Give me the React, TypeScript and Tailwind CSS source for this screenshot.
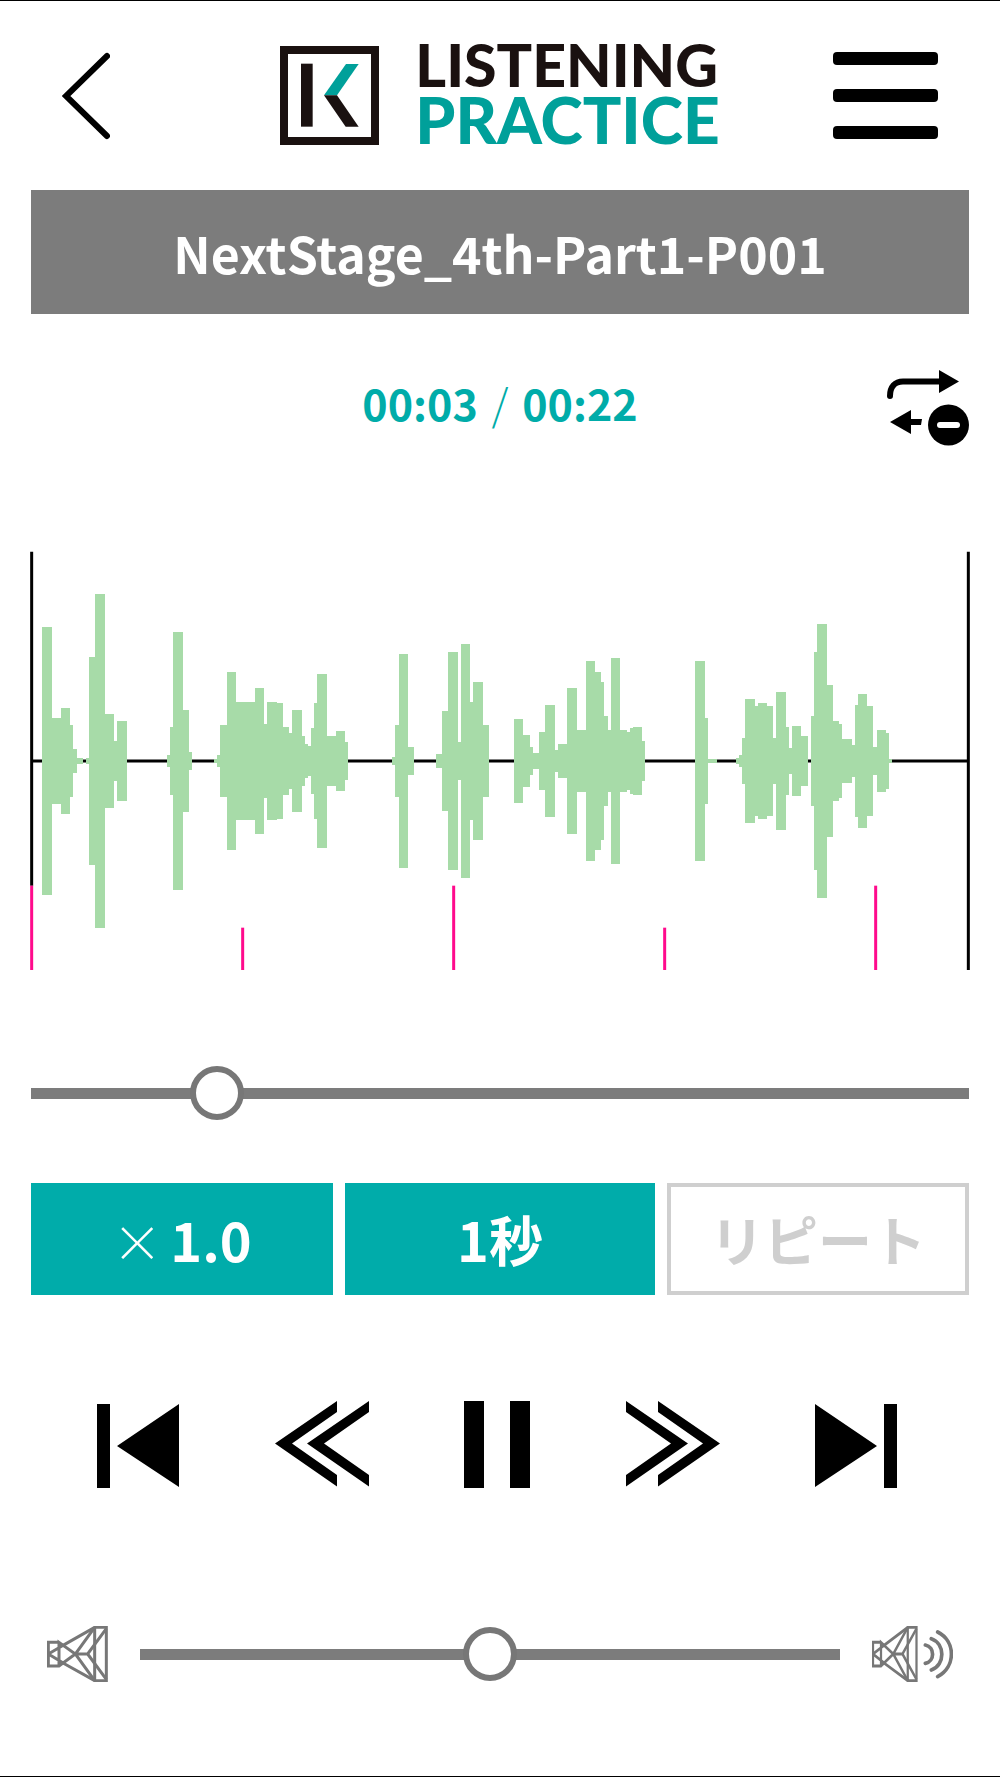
import { useState } from 'react';

// step profile of the clip: [start x, half height]
const waveSteps: [number, number][] = [
  [34, 402], [62, 130], [90, 158], [118, 107], [127, 36], [137, 8], [155, 0],
  [165, 8], [174, 313], [193, 500], [221, 140], [249, 60], [259, 121], [287, 0],
  [409, 18], [418, 102], [427, 388], [455, 154], [474, 28], [483, 0],
  [550, 5], [559, 18], [568, 107], [587, 266], [615, 177], [671, 219],
  [699, 112], [709, 177], [737, 173], [755, 102], [774, 84], [784, 154],
  [812, 74], [821, 50], [831, 46], [840, 98], [849, 173], [859, 262],
  [887, 74], [915, 90], [943, 56], [952, 0],
  [1084, 13], [1093, 107], [1103, 320], [1130, 41], [1148, 0],
  [1215, 21], [1234, 149], [1252, 327], [1280, 57], [1290, 351], [1318, 177],
  [1327, 238], [1355, 107], [1374, 0],
  [1449, 126], [1477, 79], [1496, 41], [1505, 23], [1524, 88], [1543, 168],
  [1571, 32], [1580, 51], [1609, 219], [1637, 93], [1665, 299], [1693, 266],
  [1711, 238], [1720, 135], [1730, 93], [1740, 308], [1768, 93], [1787, 88],
  [1797, 98], [1807, 103], [1833, 60], [1843, 0],
  [1993, 299], [2021, 130], [2030, 5], [2058, 0],
  [2115, 8], [2124, 18], [2133, 69], [2143, 187], [2171, 164], [2181, 173],
  [2208, 166], [2227, 69], [2236, 208], [2264, 102], [2274, 39], [2283, 105],
  [2311, 74], [2330, 0], [2340, 135], [2349, 327], [2359, 412], [2387, 229],
  [2405, 121], [2424, 112], [2433, 65], [2462, 47], [2471, 168], [2481, 201],
  [2508, 164], [2527, 42], [2537, 93], [2565, 84], [2574, 5], [2583, 0]
];

const WAVE_WIDTH = 2814;
const WAVE_MIDDLE = 630;
const secondMarks = [0, 633, 1266, 1899, 2532];

const wavePath = waveSteps
  .map(([x, half], i) => {
    if (half === 0) return '';
    const next = waveSteps[i + 1][0];
    return `M${x} ${WAVE_MIDDLE - half}H${next}V${WAVE_MIDDLE + half}H${x}Z`;
  })
  .join('');

function Waveform() {
  return (
    <svg
      viewBox={`0 0 ${WAVE_WIDTH} 1260`}
      preserveAspectRatio="none"
      className="mt-[105px] h-[420px] w-full overflow-visible"
      role="img"
      aria-label="Waveform"
    >
      <path
        d={`M2 2V1004M${WAVE_WIDTH - 2} 2V1257M0 ${WAVE_MIDDLE}H${WAVE_WIDTH}`}
        stroke="#000"
        strokeWidth="9"
      />
      <path d={wavePath} fill="#a7dba8" shapeRendering="crispEdges" />
      {secondMarks.map((x, i) => (
        <path
          key={x}
          d={`M${x + 2} ${i % 2 === 0 ? 1004 : 1130}V1257`}
          stroke="#ff0a8c"
          strokeWidth="9"
        />
      ))}
    </svg>
  );
}

function Range({
  label,
  value,
  onChange
}: {
  label: string;
  value: number;
  onChange: (value: number) => void;
}) {
  return (
    <input
      type="range"
      min={0}
      max={100}
      value={value}
      onChange={(e) => onChange(Number(e.target.value))}
      aria-label={label}
      className="block h-[54px] w-full min-w-0 cursor-pointer appearance-none bg-transparent [&::-webkit-slider-runnable-track]:h-[11px] [&::-webkit-slider-runnable-track]:bg-[#7c7c7c] [&::-webkit-slider-thumb]:-mt-[22px] [&::-webkit-slider-thumb]:size-[54px] [&::-webkit-slider-thumb]:appearance-none [&::-webkit-slider-thumb]:rounded-full [&::-webkit-slider-thumb]:border-[6px] [&::-webkit-slider-thumb]:border-solid [&::-webkit-slider-thumb]:border-[#777] [&::-webkit-slider-thumb]:bg-white"
    />
  );
}

function Logo() {
  return (
    <div className="flex items-center gap-9">
      <svg viewBox="0 0 297 297" className="size-[99px]" aria-hidden="true">
        <rect x="12" y="12" width="273" height="273" fill="none" stroke="#1a1110" strokeWidth="24" />
        <path d="M63 53H98V242H63Z" fill="#1a1110" />
        <path d="M132 148L198 54H236L171 148Z" fill="#00a09a" />
        <path d="M132 148H171L236 242H197Z" fill="#1a1110" />
      </svg>
      <div className="font-['Lato'] font-black">
        <div className="text-[59px] leading-[48px] text-[#1a1110]">LISTENING</div>
        <div className="text-[64px] leading-[62px] text-[#00a09a]">PRACTICE</div>
      </div>
    </div>
  );
}

function SpeakerShape() {
  return (
    <g fill="none" stroke="#777" strokeWidth="9">
      <path d="M36 49H4V120H36L85 84L36 49V120M4 84L50 57M4 84L50 112" />
      <path d="M48 58L143 4H178V164H143L48 111M143 4V164" />
      <path d="M143 4L85 84L143 164M85 84H122L178 8M122 84L178 160" />
    </g>
  );
}

const skipIcon = (
  <svg viewBox="0 0 82 87" className="h-[87px] w-[82px]" aria-hidden="true">
    <path d="M0 3H13V87H0ZM20 45L82 3V86Z" />
  </svg>
);

const seekIcon = (
  <svg viewBox="0 0 94 87" className="h-[87px] w-[94px]" aria-hidden="true">
    <path d="M0 42.500L62 0V11L17 42.500L62 74V85.500ZM32 42.500L94 0V11L49 42.500L94 74V85.500Z" />
  </svg>
);

export default function App() {
  const [position, setPosition] = useState(18);
  const [volume, setVolume] = useState(50);
  const [playing, setPlaying] = useState(true);

  return (
    <div className="border-y border-black bg-white pb-[94px] font-['Noto_Sans_CJK_JP',sans-serif] text-black">
      <header className="grid h-[189px] grid-cols-[1fr_auto_1fr] items-center px-[62px]">
        <button type="button" aria-label="Back" className="cursor-pointer justify-self-start">
          <svg viewBox="0 0 48 88" className="h-[88px] w-12" aria-hidden="true">
            <path
              d="M45 4L4 44L45 84"
              fill="none"
              stroke="#000"
              strokeWidth="6"
              strokeLinecap="round"
            />
          </svg>
        </button>
        <Logo />
        <button
          type="button"
          aria-label="Menu"
          className="flex w-[105px] cursor-pointer flex-col gap-6 justify-self-end"
        >
          <span className="h-[13px] w-full rounded-sm bg-black" />
          <span className="h-[13px] w-full rounded-sm bg-black" />
          <span className="h-[13px] w-full rounded-sm bg-black" />
        </button>
      </header>

      <main className="px-[31px]">
        <div className="flex h-[124px] items-center justify-center bg-[#7c7c7c]">
          <h1 className="text-[50px] leading-[80px] font-bold whitespace-nowrap text-white">
            NextStage_4th-Part1-P001
          </h1>
        </div>

        <div className="mt-14 grid h-[76px] grid-cols-[1fr_auto_1fr] items-center">
          <p className="col-start-2 pb-3 text-[43px] leading-[60px] font-bold text-[#00aca9]">
            00:03 <span className="mx-1 font-light">/</span> 00:22
          </p>
          <button
            type="button"
            aria-label="Loop off"
            className="cursor-pointer justify-self-end"
          >
            <svg viewBox="0 0 82 76" className="h-[76px] w-[82px]" aria-hidden="true">
              <path
                d="M3 26C3 17 8 11.500 16 11.500H54"
                fill="none"
                stroke="#000"
                strokeWidth="6"
                strokeLinecap="round"
              />
              <path d="M52 0L72 11.500L52 23ZM3 52L24 40V49H35L34 55H24V64Z" />
              <circle cx="61.500" cy="55" r="20.500" />
              <rect x="50" y="52" width="23" height="6" rx="3" fill="#fff" />
            </svg>
          </button>
        </div>

        <Waveform />

        <div className="mt-[95px]">
          <Range label="Position" value={position} onChange={setPosition} />
        </div>

        <div className="mt-[63px] grid h-28 grid-cols-[302fr_310fr_302fr] gap-3 text-[54px] leading-none font-bold">
          <button type="button" className="cursor-pointer bg-[#00acaa] text-white">
            <span className="mr-2 text-[50px] font-light">×</span>1.0
          </button>
          <button type="button" className="cursor-pointer bg-[#00acaa] text-white">
            1秒
          </button>
          <button type="button" disabled className="border-4 border-[#cfcfcf] text-[#cfcfcf]">
            リピート
          </button>
        </div>

        <div className="mt-[106px] flex items-center justify-between pr-[72px] pl-[66px]">
          <button type="button" aria-label="Previous" className="cursor-pointer">
            {skipIcon}
          </button>
          <button type="button" aria-label="Rewind" className="cursor-pointer">
            {seekIcon}
          </button>
          <button
            type="button"
            aria-label={playing ? 'Pause' : 'Play'}
            className="cursor-pointer"
            onClick={() => setPlaying((on) => !on)}
          >
            <svg viewBox="0 0 66 87" className="h-[87px] w-[66px]" aria-hidden="true">
              <path d={playing ? 'M0 0H20V87H0ZM46 0H66V87H46Z' : 'M0 0L66 43L0 87Z'} />
            </svg>
          </button>
          <button type="button" aria-label="Fast forward" className="rotate-y-180 cursor-pointer">
            {seekIcon}
          </button>
          <button type="button" aria-label="Next" className="rotate-y-180 cursor-pointer">
            {skipIcon}
          </button>
        </div>

        <div className="mt-[138px] flex h-14 items-center gap-8 px-4">
          <svg viewBox="0 0 183 168" className="h-14 w-[61px] shrink-0" aria-hidden="true">
            <SpeakerShape />
          </svg>
          <Range label="Volume" value={volume} onChange={setVolume} />
          <svg viewBox="0 0 243 168" className="h-14 w-[81px] shrink-0" aria-hidden="true">
            <g transform="scale(0.75 1)">
              <SpeakerShape />
            </g>
            <path
              d="M160 57C189 63 189 106 160 112M178 38C220 52 220 118 178 132M197 18C252 46 252 122 197 152"
              fill="none"
              stroke="#777"
              strokeWidth="11"
              strokeLinecap="round"
            />
          </svg>
        </div>
      </main>
    </div>
  );
}
